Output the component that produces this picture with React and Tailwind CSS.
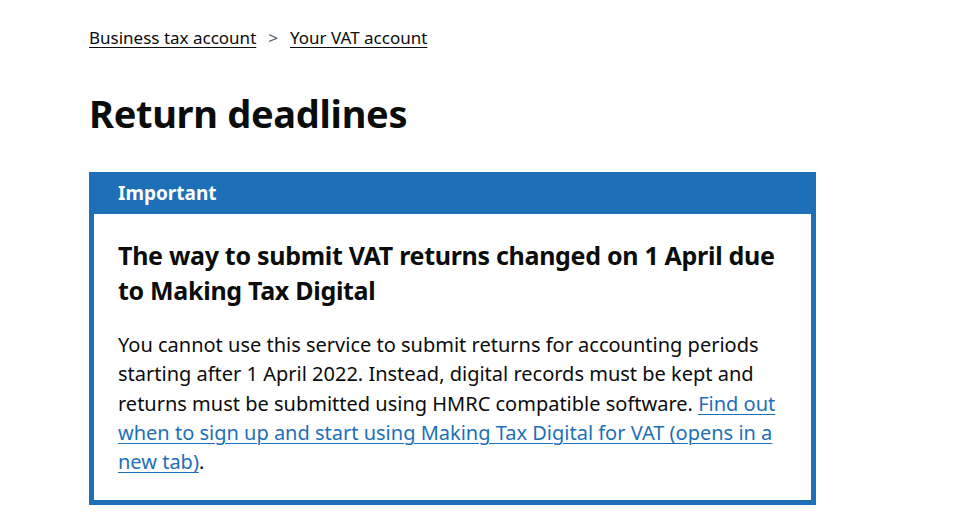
import React from 'react';

const font = { fontFamily: '"Noto Sans", Arial, sans-serif' };

export default function App() {
    return (
        <div className="min-h-[514px] bg-white text-[#0b0c0c]" style={font}>
            <div className="pl-[89px] pr-[144px] pt-[25px]">
                <nav className="flex items-center text-[17px] leading-[26px]">
                    <a href="#" className="underline underline-offset-[3px] decoration-1 text-[#0b0c0c]">Business tax account</a>
                    <span className="mx-[12px] text-[#505a5f]">&gt;</span>
                    <a href="#" className="underline underline-offset-[3px] decoration-1 text-[#0b0c0c]">Your VAT account</a>
                </nav>

                <h1 className="mt-[38px] text-[38px] font-bold leading-[48px] tracking-[-0.3px]">Return deadlines</h1>

                <div className="mt-[35px] w-[727px] border-[5px] border-[#1d70b8]">
                    <div className="bg-[#1d70b8] px-[24px] pb-[6px] pt-[2px]">
                        <h2 className="text-[19px] font-bold leading-[29px] text-white">Important</h2>
                    </div>
                    <div className="px-[24px] pb-[24px] pt-[24px]">
                        <h3 className="text-[25px] font-bold leading-[35px] tracking-[-0.3px]">
                            The way to submit VAT returns changed on 1 April due to Making Tax Digital
                        </h3>
                        <p className="mt-[22px] text-[20px] leading-[29.3px]">
                            You cannot use this service to submit returns for accounting periods starting after 1 April 2022. Instead, digital records must be kept and returns must be submitted using HMRC compatible software.{' '}
                            <a href="#" className="text-[#1d70b8] underline underline-offset-[3px] decoration-1">
                                Find out when to sign up and start using Making Tax Digital for VAT (opens in a new tab)
                            </a>
                            .
                        </p>
                    </div>
                </div>
            </div>
        </div>
    );
}
